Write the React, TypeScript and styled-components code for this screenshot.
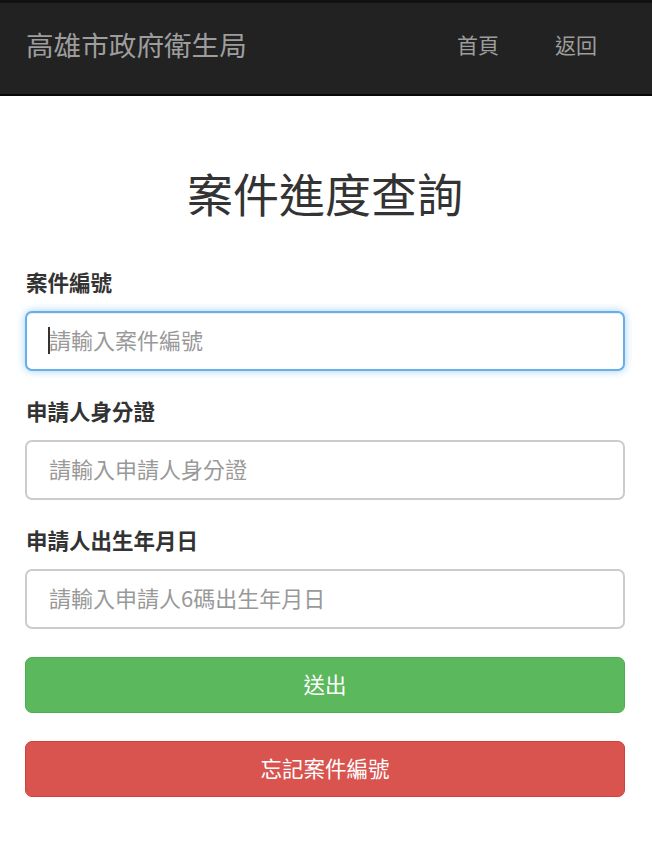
import React from "react";
import styled, { createGlobalStyle, css } from "styled-components";

const GlobalStyle = createGlobalStyle`
  html, body {
    margin: 0;
    padding: 0;
    background: #ffffff;
    font-family: "Noto Sans CJK TC", "Noto Sans", sans-serif;
    color: #333333;
  }
  * { box-sizing: border-box; }
`;

const Navbar = styled.nav`
  display: flex;
  align-items: center;
  justify-content: space-between;
  height: 96px;
  padding: 0 55px 8px 26px;
  background: #222222;
  border-top: 3px solid #111111;
  border-bottom: 2px solid #080808;
`;

const Brand = styled.div`
  font-size: 27.6px;
  line-height: 1;
  color: #9d9d9d;
`;

const NavLinks = styled.div`
  display: flex;
  align-items: center;
`;

const NavLink = styled.a`
  font-size: 21px;
  line-height: 1;
  color: #9d9d9d;
  text-decoration: none;
  padding: 0 28px;
  &:last-child {
    padding-right: 0;
  }
`;

const Main = styled.main`
  padding: 69px 27px 40px 25px;
  display: flex;
  flex-direction: column;
`;

const Title = styled.h2`
  margin: 0 0 50px;
  font-size: 46px;
  line-height: 55px;
  font-weight: 400;
  text-align: center;
  color: #333333;
`;

const Group = styled.div`
  display: flex;
  flex-direction: column;
  margin-bottom: 28px;
`;

const Label = styled.label`
  font-size: 21.5px;
  line-height: 24px;
  font-weight: 700;
  color: #333333;
  margin: 0 0 17px 1px;
`;

const InputWrap = styled.div`
  position: relative;
`;

const Input = styled.input<{ $focused?: boolean }>`
  display: block;
  width: 100%;
  height: 60px;
  padding: 0 22px 4px;
  font-family: inherit;
  font-size: 22px;
  color: #555555;
  background: #ffffff;
  border: 2px solid #cccccc;
  border-radius: 7px;
  outline: none;
  &::placeholder {
    color: #999999;
  }
  ${(p) =>
    p.$focused &&
    css`
      border-color: #66afe9;
      box-shadow: inset 0 1px 1px rgba(0, 0, 0, 0.075),
        0 0 8px rgba(102, 175, 233, 0.6);
    `}
`;

const Caret = styled.span`
  position: absolute;
  left: 23px;
  top: 16px;
  width: 2px;
  height: 27px;
  background: #333333;
`;

const Button = styled.button<{ $variant: "success" | "danger" }>`
  display: block;
  width: 100%;
  height: 56px;
  margin-bottom: 28px;
  padding: 0 0 3px;
  font-family: inherit;
  font-size: 21.5px;
  color: #ffffff;
  border-radius: 7px;
  cursor: pointer;
  ${(p) =>
    p.$variant === "success"
      ? css`
          background: #5cb85c;
          border: 1px solid #4cae4c;
        `
      : css`
          background: #d9534f;
          border: 1px solid #d43f3a;
        `}
`;

export default function App() {
  return (
    <>
      <GlobalStyle />
      <Navbar>
        <Brand>高雄市政府衛生局</Brand>
        <NavLinks>
          <NavLink href="#">首頁</NavLink>
          <NavLink href="#">返回</NavLink>
        </NavLinks>
      </Navbar>
      <Main>
        <Title>案件進度查詢</Title>
        <Group>
          <Label>案件編號</Label>
          <InputWrap>
            <Input $focused placeholder="請輸入案件編號" readOnly />
            <Caret />
          </InputWrap>
        </Group>
        <Group>
          <Label>申請人身分證</Label>
          <Input placeholder="請輸入申請人身分證" readOnly />
        </Group>
        <Group>
          <Label>申請人出生年月日</Label>
          <Input placeholder="請輸入申請人6碼出生年月日" readOnly />
        </Group>
        <Button $variant="success">送出</Button>
        <Button $variant="danger">忘記案件編號</Button>
      </Main>
    </>
  );
}
